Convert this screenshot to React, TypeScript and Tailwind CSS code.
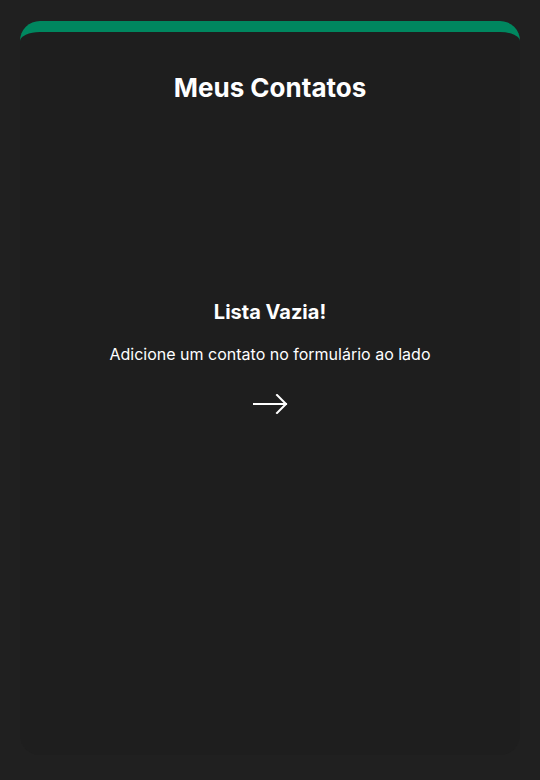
import React from "react";

export default function App() {
  return (
    <div className="min-h-[780px] w-full bg-[#202020] pt-[21px] px-[20px]" style={{ fontFamily: "Inter, 'Noto Sans', sans-serif" }}>
      <div className="h-[734px] rounded-[20px] border-t-[11px] border-[#00875f] bg-[#1e1e1e] flex flex-col items-center">
        <h1 className="mt-[40px] text-[26px] leading-[32px] font-bold text-white">Meus Contatos</h1>
        <h2 className="mt-[194px] text-[20px] leading-[28px] font-bold text-white">Lista Vazia!</h2>
        <p className="mt-[16px] text-[16px] leading-[24px] text-white">Adicione um contato no formulário ao lado</p>
        <svg className="mt-[28px]" width="36" height="20" viewBox="0 0 36 20" fill="none" stroke="white" strokeWidth="2" strokeLinecap="square">
          <path d="M2 10H34" />
          <path d="M25 1L34 10L25 19" />
        </svg>
      </div>
    </div>
  );
}
